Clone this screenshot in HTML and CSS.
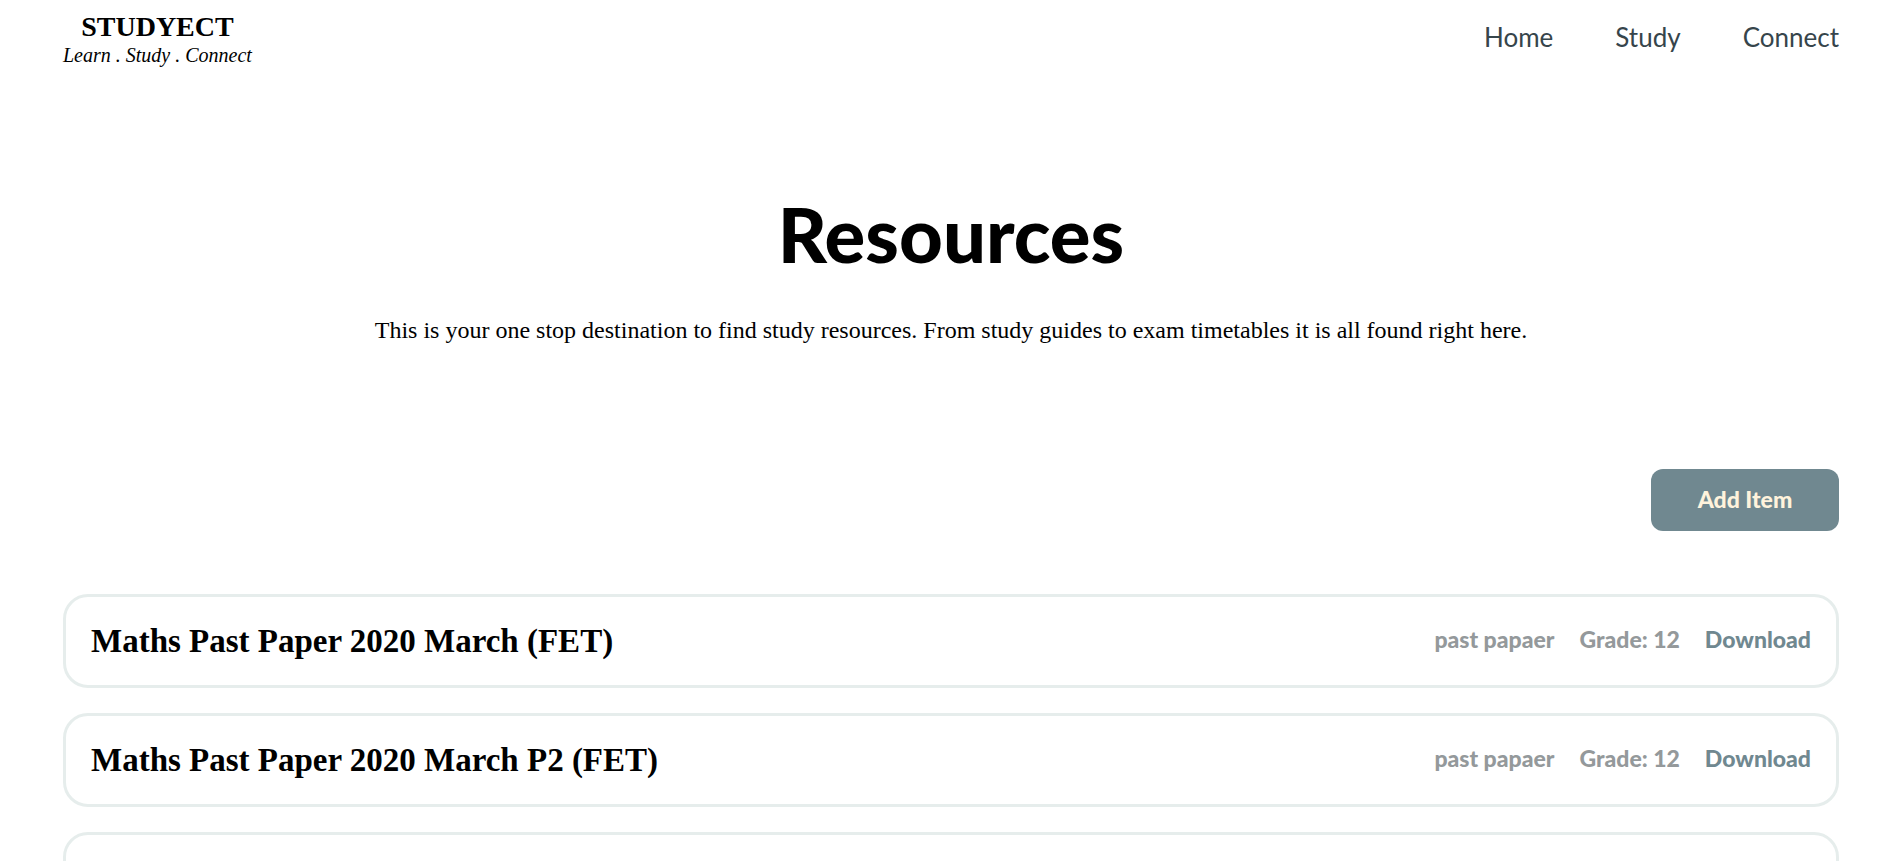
FILE: index.html
```html
<!DOCTYPE html>
<html lang="en">
<head>
<meta charset="utf-8">
<meta name="viewport" content="width=device-width, initial-scale=1">
<title>Studyect - Resources</title>
<link rel="stylesheet" href="styles.css">
</head>
<body>
<header class="header">
  <div class="brand">
    <div class="brand-name">STUDYECT</div>
    <div class="brand-tagline">Learn . Study . Connect</div>
  </div>
  <nav class="nav">
    <a class="nav-link" href="#home">Home</a>
    <a class="nav-link" href="#study">Study</a>
    <a class="nav-link" href="#connect">Connect</a>
  </nav>
</header>
<main>
  <section class="hero">
    <h1 class="hero-title">Resources</h1>
    <p class="hero-text">This is your one stop destination to find study resources. From study guides to exam timetables it is all found right here.</p>
  </section>
  <div class="toolbar">
    <button class="add-button" type="button">Add Item</button>
  </div>
  <ul class="resources">
    <li class="resource">
      <h2 class="resource-title">Maths Past Paper 2020 March (FET)</h2>
      <div class="resource-info">
        <span>past papaer</span>
        <span>Grade: 12</span>
        <a class="download" href="#download-1">Download</a>
      </div>
    </li>
    <li class="resource">
      <h2 class="resource-title">Maths Past Paper 2020 March P2 (FET)</h2>
      <div class="resource-info">
        <span>past papaer</span>
        <span>Grade: 12</span>
        <a class="download" href="#download-2">Download</a>
      </div>
    </li>
    <li class="resource"></li>
  </ul>
</main>
</body>
</html>
```
FILE: styles.css
```css
* {
  box-sizing: border-box;
}

body {
  margin: 0;
  padding: 0 56px 0 63px;
  background: #fff;
  color: #000;
  font-family: "Liberation Serif", serif;
}

.header {
  display: flex;
  justify-content: space-between;
  align-items: center;
  padding-top: 11px;
}

.brand {
  text-align: center;
}

.brand-name {
  font-size: 28px;
  line-height: 32px;
  font-weight: 700;
}

.brand-tagline {
  font-size: 20px;
  line-height: 24px;
  font-style: italic;
}

.nav {
  display: flex;
  gap: 62px;
  padding-bottom: 4px;
}

.nav-link {
  color: #36454b;
  font-family: Lato, sans-serif;
  font-size: 26px;
  line-height: 32px;
  text-decoration: none;
}

.hero {
  padding-top: 122px;
  text-align: center;
}

.hero-title {
  margin: 0;
  font-family: Lato, sans-serif;
  font-size: 76px;
  line-height: 90px;
  font-weight: 900;
}

.hero-text {
  margin: 37px 0 0;
  font-size: 24px;
  line-height: 28px;
}

.toolbar {
  display: flex;
  justify-content: flex-end;
  padding-top: 125px;
}

.add-button {
  min-width: 188px;
  padding: 15px 40px 17px;
  border: 0;
  border-radius: 12px;
  background: #708890;
  color: #fff3dc;
  font-family: Lato, sans-serif;
  font-size: 23px;
  line-height: 30px;
  font-weight: 900;
}

.resources {
  display: grid;
  gap: 25px;
  margin: 63px 0 0;
  padding: 0;
  list-style: none;
}

.resource {
  display: flex;
  justify-content: space-between;
  align-items: center;
  min-height: 94px;
  padding: 0 25px;
  border: 3px solid #e6edec;
  border-radius: 25px;
}

.resource-title {
  margin: 0;
  font-size: 33px;
  line-height: 40px;
  font-weight: 700;
}

.resource-info {
  display: flex;
  gap: 25px;
  padding-bottom: 4px;
  color: #94999b;
  font-family: Lato, sans-serif;
  font-size: 23px;
  line-height: 28px;
  font-weight: 900;
}

.download {
  color: #708890;
  text-decoration: none;
}
```
